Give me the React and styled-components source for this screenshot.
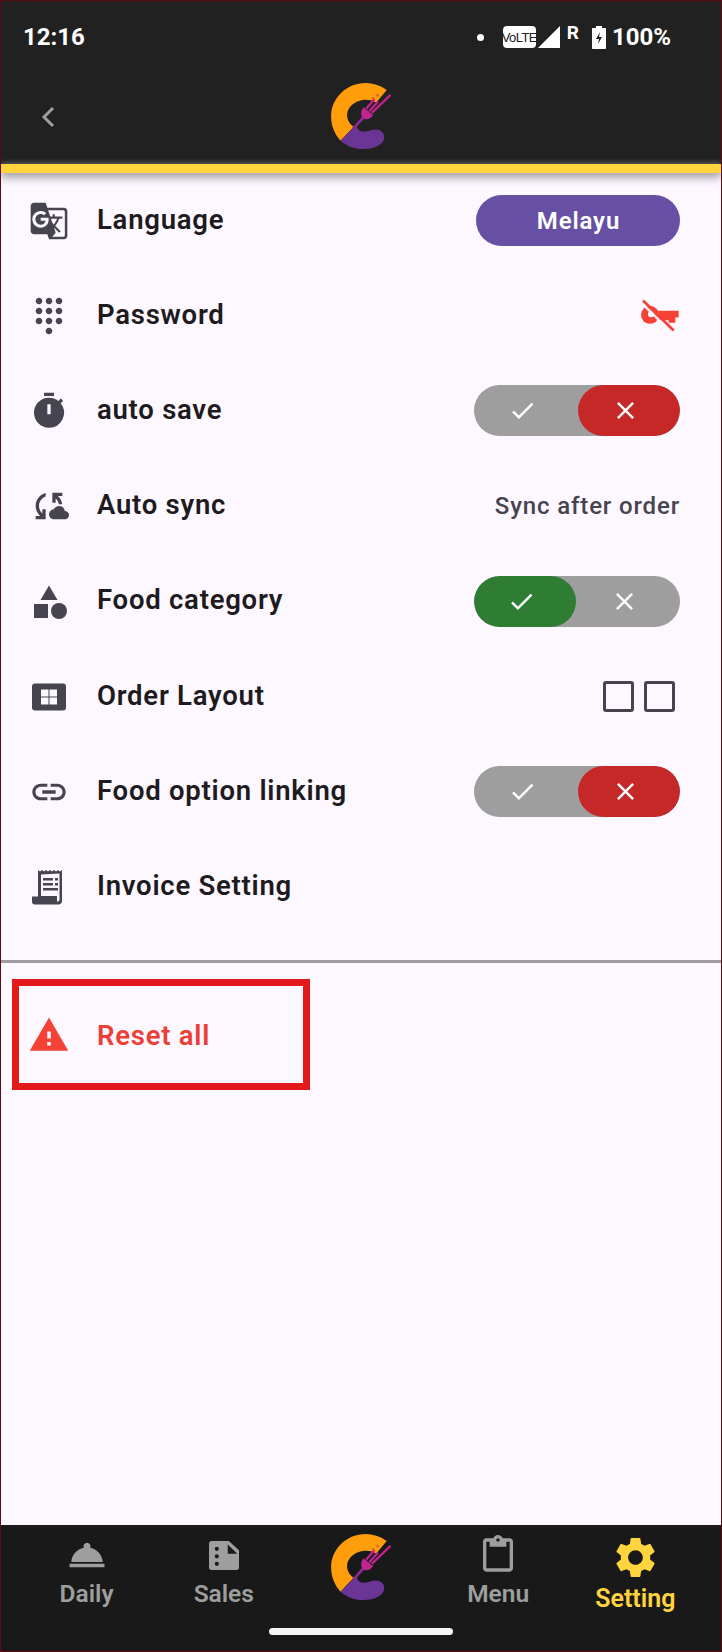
import React from "react";
import styled, { createGlobalStyle } from "styled-components";
import {
  MdGTranslate, MdDialpad, MdTimer, MdLink, MdWarning, MdRoomService,
  MdSettings, MdOutlineContentPaste, MdCheck, MdClose, MdCloudSync,
} from "react-icons/md";

const Global = createGlobalStyle`
  html, body { margin: 0; padding: 0; background: #FDF7FF; }
  * { box-sizing: border-box; }
  body { font-family: Roboto, "Noto Sans", sans-serif; }
`;

const Phone = styled.div`
  width: 722px; height: 1652px; display: flex; flex-direction: column;
  background: #FDF7FF; border: 1px solid #5c0a14; overflow: hidden; position: relative;
`;
const TopBar = styled.header`
  height: 163px; background: #212121; display: flex; flex-direction: column; flex: none;
`;
const StatusBar = styled.div`
  height: 72px; padding: 0 50px 0 22px; display: flex; align-items: center; justify-content: space-between;
  color: #fff; font-family: Roboto, sans-serif; font-weight: 700;
`;
const Clock = styled.span`font-size: 24px;`;
const StatusRight = styled.div`display: flex; align-items: center; color: #fff; font-size: 24px;`;
const Dot = styled.span`width: 7px; height: 7px; border-radius: 50%; background: #fff; margin-right: 19px;`;
const Volte = styled.span`
  width: 33px; height: 22px; background: #fff; color: #212121; border-radius: 4px; font-family: "Liberation Sans", sans-serif;
  font-size: 13px; font-weight: 400; letter-spacing: -.6px; display: flex; align-items: center; justify-content: center; margin-right: 2px;
`;
const Roam = styled.span`font-size: 19px; align-self: flex-start; margin: 0 13px 0 6px; line-height: 20px; font-weight: 700;`;
const Percent = styled.span`margin-left: 6px;`;
const NavRow = styled.div`
  flex: 1; display: flex; align-items: center; justify-content: center; position: relative; padding-bottom: 5px;
`;
const Back = styled.span`
  position: absolute; left: 39px; top: 32px; display: flex;
`;
const YellowBar = styled.div`
  height: 9px; flex: none; background: #FFD43F; box-shadow: 0 -2px 4px rgba(120,120,130,.6), 0 4px 10px rgba(60,60,60,.55);
  position: relative; z-index: 2;
`;
const List = styled.main`
  display: flex; flex-direction: column; padding: 0 41px 0 28px; flex: none; height: 787px;
`;
const Row = styled.div`
  height: 95.2px; display: flex; align-items: center; flex: none;
`;
const IconSlot = styled.span`
  width: 40px; height: 40px; flex: none; color: #46444f; display: flex; align-items: center; justify-content: center;
`;
const Label = styled.span`
  margin-left: 28px; margin-bottom: 3px; font-size: 27.5px; font-weight: 600; letter-spacing: .75px; color: #1d1b20; flex: 1; white-space: nowrap;
`;
const Pill = styled.div`
  width: 204px; height: 51px; border-radius: 26px; background: #6750A4; color: #fff; font-size: 24px; font-weight: 600;
  letter-spacing: .85px; padding-left: 1px; display: flex; align-items: center; justify-content: center;
`;
const Toggle = styled.div`
  width: 206px; height: 51px; border-radius: 26px; background: #9e9e9e; display: flex; overflow: hidden; flex: none;
`;
const Segment = styled.div`
  flex: ${p => (p.$bg ? "0 0 102px" : "1")}; height: 100%; padding-right: 8px; display: flex; align-items: center; justify-content: center; color: #fff;
  background: ${p => p.$bg || "transparent"};
  border-radius: ${p => (p.$bg ? "26px" : "0")};
`;
const SyncNote = styled.span`
  font-size: 24px; font-weight: 500; letter-spacing: .85px; color: #46444f;
`;
const Boxes = styled.div`display: flex; gap: 10px; margin-right: 5px;`;
const Box = styled.span`
  width: 31px; height: 31px; border: 3px solid #46444f; border-radius: 3px;
`;
const Divider = styled.hr`
  height: 3px; margin: 0; border: 0; background: #a09ea3; flex: none;
`;
const ResetWrap = styled.section`
  flex: 1; padding: 16px 0 0 11px;
`;
const ResetBox = styled.div`
  width: 298px; height: 111px; border: 7px solid #E31A1C; display: flex; align-items: center; padding-left: 9px;
`;
const ResetLabel = styled(Label)`
  color: #EA4038; margin-left: 27px; margin-bottom: 0; margin-top: 2px;
`;
const BottomNav = styled.nav`
  height: 126px; flex: none; background: #191919; display: grid; grid-template-columns: repeat(5, 137.2px);
  position: relative; padding-left: 17px;
`;
const Tab = styled.div`
  display: flex; flex-direction: column; align-items: center; color: ${p => (p.$on ? "#FFD43F" : "#9e9e9e")};
  font-size: ${p => (p.$on ? "25px" : "24.5px")}; font-weight: 600; padding-top: ${p => (p.$on ? "7px" : "9px")}; line-height: 30px;
`;
const TabIcon = styled.span`
  height: ${p => (p.$on ? "51px" : "42px")}; display: flex; align-items: center; justify-content: center; margin-bottom: ${p => (p.$on ? "1px" : "3px")};
`;
const Center = styled.div`display: flex; justify-content: center; padding-top: 9px;`;
const Handle = styled.span`
  position: absolute; left: 268px; bottom: 16px; width: 184px; height: 7px; border-radius: 4px; background: #f5f5f5;
`;

const Logo = () => (
  <svg width="60" height="66" viewBox="25 22 172 190">
    <path d="M185 42C165 28 145 22 125 22 70 22 25 65 25 118c0 27 10 52 27 70l38-40c-14-9-22-24-18-43 6-20 28-35 53-35 10 0 20 2 30 8z" fill="#FF9E0A" />
    <path d="M52 188 97 142c3 14 10 20 24 20 12 0 20-6 33-6 14 0 24 9 24 22 0 20-28 34-60 34-28 0-50-10-66-24z" fill="#6A3594" />
    <path d="M88 154 126 112" stroke="#8a2a94" strokeWidth="8" />
    <path d="M118 92l28 22c-6 10-18 16-28 10-9-6-8-22 0-32z" fill="#C0248F" />
    <path d="M126 96l24-28M135 103l25-28M142 108l54-52" stroke="#C0248F" strokeWidth="6.500" />
    <circle cx="146" cy="66" r="4" fill="#e9622e" /><circle cx="159" cy="57" r="4" fill="#e9622e" />
  </svg>
);
const BackChevron = () => (
  <svg width="16" height="24" viewBox="0 0 16 24"><path d="M13 3 4 12l9 9" fill="none" stroke="#9e9e9e" strokeWidth="3" /></svg>
);
const Shapes = () => (
  <svg width="40" height="40" viewBox="0 0 40 40" fill="currentColor">
    <path d="M20 4.500 28.500 19h-17z" /><rect x="5" y="23" width="14" height="14" /><circle cx="30" cy="30" r="8" />
  </svg>
);
const GridWindow = () => (
  <svg width="40" height="40" viewBox="0 0 40 40">
    <rect x="3" y="6.500" width="34" height="27" rx="3" fill="currentColor" />
    <path d="M12 12.500h7.500V19.500H12zM20.500 12.500H28V19.500h-7.500zM12 20.500h7.500V27.500H12zM20.500 20.500H28V27.500h-7.500z" fill="#FDF7FF" />
  </svg>
);
const Receipt = () => (
  <svg width="34" height="36" viewBox="0 0 34 36" fill="currentColor">
    <path d="M6 1l2 1.500L10 1l2 1.500L14 1l2 1.500L18 1l2 1.500L22 1l2 1.500L26 1l2 1.500L30 1v31c0 2-1.500 3.500-3.500 3.500H3c-2 0-3-1-3-3v-5h6zm3 4.500V27h16v5.500c1.500 0 2.500-.5 2.500-2V4.500z" fillRule="evenodd"/>
    <path d="M11 9h10v2.500H11zM11 14h10v2.500H11zM23 9h3v2.500h-3zM23 14h3v2.500h-3zM11 19h15v2.500H11z" />
  </svg>
);
const KeyOff = () => (
  <svg width="40" height="37" viewBox="540 355 120 110">
    <circle cx="570" cy="408" r="27" fill="#F44336" />
    <path d="M595 396h61v20h-10v16h-20v-8h-31z" fill="#F44336" />
    <circle cx="573" cy="406" r="9" fill="#FDF7FF" />
    <path d="M545 373 632 458" stroke="#FDF7FF" strokeWidth="7" />
    <path d="M549 365 641 455" stroke="#F44336" strokeWidth="8" />
  </svg>
);
const SalesDoc = () => (
  <svg width="30" height="29" viewBox="27 15 88 85">
    <path d="M34 15h51l30 27v51c0 4-3 7-7 7H34c-4 0-7-3-7-7V22c0-4 3-7 7-7z" fill="#9e9e9e" />
    <path d="M82 25v27h28z" fill="#191919" />
    <circle cx="50" cy="38" r="6" fill="#191919" /><circle cx="50" cy="60" r="6" fill="#191919" /><circle cx="50" cy="82" r="6" fill="#191919" />
  </svg>
);
const BatteryIcon = () => (
  <svg width="14" height="23" viewBox="0 0 14 23"><path d="M4 0h6v2h3c.6 0 1 .4 1 1v19c0 .6-.4 1-1 1H1c-.6 0-1-.4-1-1V3c0-.6.4-1 1-1h3z" fill="#fff"/><path d="M8 6 4 13h3l-1 5 4-7H7z" fill="#212121"/></svg>
);
const Signal = () => (
  <svg width="23" height="22" viewBox="0 0 23 22"><path d="M22 0v22H0z" fill="#fff"/></svg>
);

const Switch = ({ on }) => (
  <Toggle>
    <Segment $bg={on ? "#2E7D32" : undefined}><MdCheck size={29} /></Segment>
    <Segment $bg={on ? undefined : "#C62828"}><MdClose size={29} /></Segment>
  </Toggle>
);

const rows = [
  { label: "Language", icon: <MdGTranslate size={40} />, right: <Pill>Melayu</Pill> },
  { label: "Password", icon: <MdDialpad size={40} />, right: <KeyOff /> },
  { label: "auto save", icon: <MdTimer size={40} />, right: <Switch on={false} /> },
  { label: "Auto sync", icon: <MdCloudSync size={40} />, right: <SyncNote>Sync after order</SyncNote> },
  { label: "Food category", icon: <Shapes />, right: <Switch on /> },
  { label: "Order Layout", icon: <GridWindow />, right: <Boxes><Box /><Box /></Boxes> },
  { label: "Food option linking", icon: <MdLink size={40} />, right: <Switch on={false} /> },
  { label: "Invoice Setting", icon: <Receipt />, right: null },
];

export default function App() {
  return (
    <Phone>
      <Global />
      <TopBar>
        <StatusBar>
          <Clock>12:16</Clock>
          <StatusRight>
            <Dot /><Volte>VoLTE</Volte><Signal /><Roam>R</Roam><BatteryIcon /><Percent>100%</Percent>
          </StatusRight>
        </StatusBar>
        <NavRow>
          <Back><BackChevron /></Back>
          <Logo />
        </NavRow>
      </TopBar>
      <YellowBar />
      <List>
        {rows.map(r => (
          <Row key={r.label}>
            <IconSlot>{r.icon}</IconSlot>
            <Label>{r.label}</Label>
            {r.right}
          </Row>
        ))}
      </List>
      <Divider />
      <ResetWrap>
        <ResetBox>
          <MdWarning size={42} color="#F44336" />
          <ResetLabel>Reset all</ResetLabel>
        </ResetBox>
      </ResetWrap>
      <BottomNav>
        <Tab><TabIcon><MdRoomService size={42} /></TabIcon>Daily</Tab>
        <Tab><TabIcon><SalesDoc /></TabIcon>Sales</Tab>
        <Center><Logo /></Center>
        <Tab><TabIcon><MdOutlineContentPaste size={40} /></TabIcon>Menu</Tab>
        <Tab $on><TabIcon $on><MdSettings size={49} /></TabIcon>Setting</Tab>
        <Handle />
      </BottomNav>
    </Phone>
  );
}
